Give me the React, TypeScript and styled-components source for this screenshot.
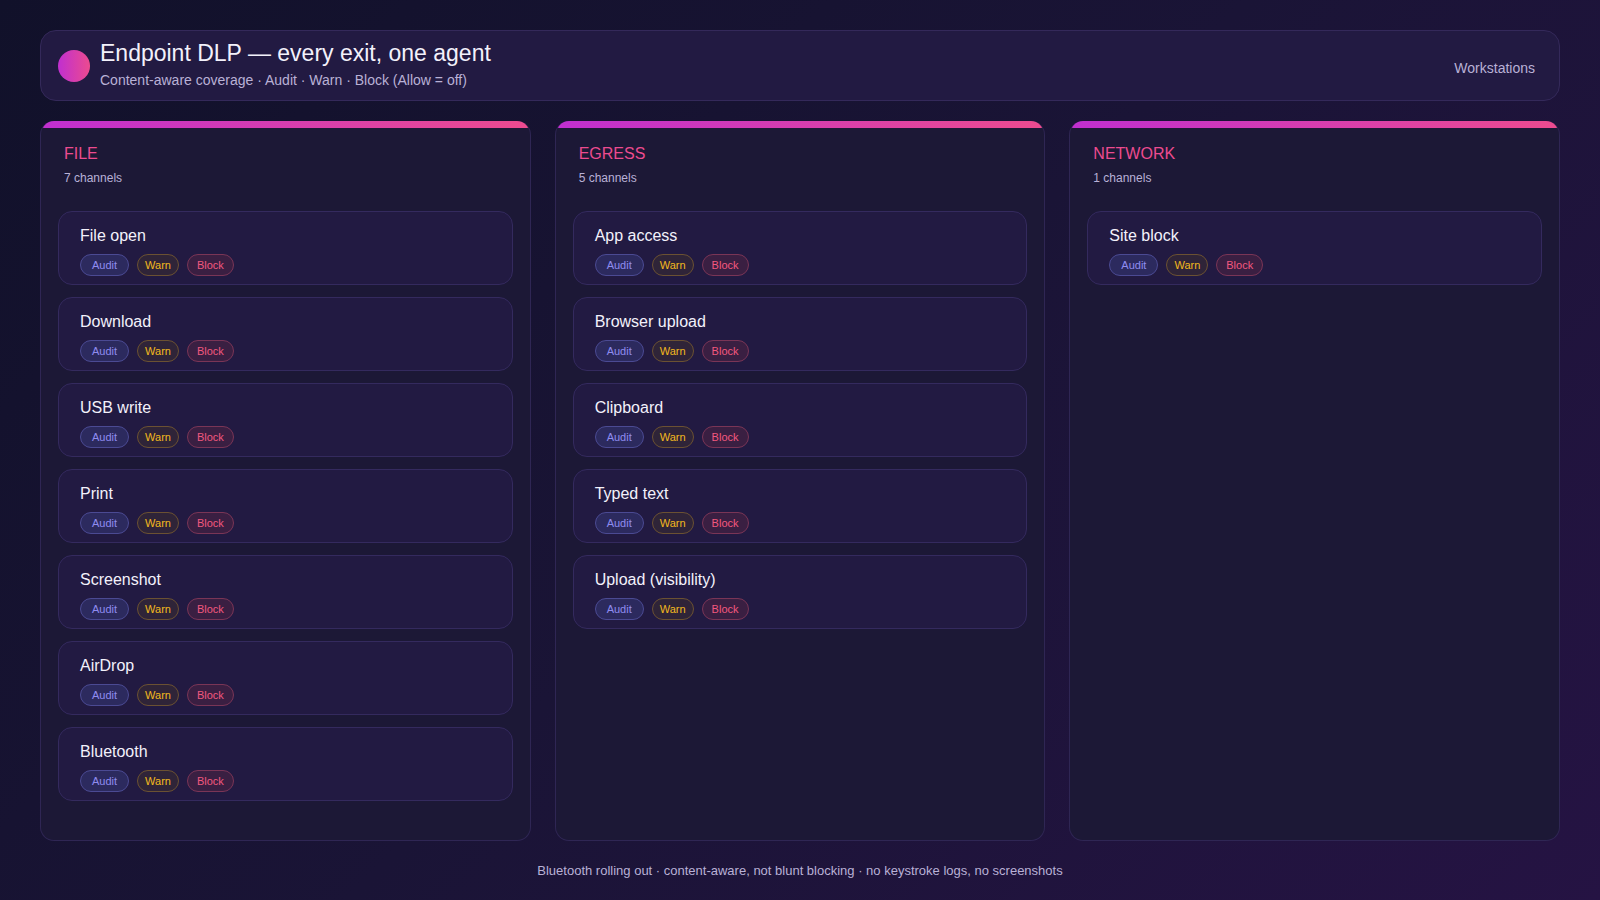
import React from "react";
import styled, { createGlobalStyle } from "styled-components";

const Global = createGlobalStyle`
  html, body { margin: 0; padding: 0; }
  body {
    font-family: "Liberation Sans", Arial, sans-serif;
    background: linear-gradient(135deg, #11112a 0%, #1a1436 50%, #251343 100%);
    width: 1600px; height: 900px; overflow: hidden;
  }
`;

const Page = styled.div`
  box-sizing: border-box;
  width: 1600px; height: 900px;
  padding: 30px 40px 0 40px;
  display: flex; flex-direction: column;
`;

const Header = styled.div`
  box-sizing: border-box;
  height: 71px;
  border: 1px solid #34295a;
  background: #221a42;
  border-radius: 16px;
  display: flex; align-items: center;
  padding: 0 24px 0 17px;
  gap: 10px;
`;

const Dot = styled.div`
  width: 32px; height: 32px; border-radius: 50%;
  background: linear-gradient(90deg, #c02fd0, #ec4b8f);
`;

const Titles = styled.div` flex: 1; display: flex; flex-direction: column; gap: 5px; margin-top: -4px;`;
const Title = styled.div` color: #f3f1fb; font-size: 23px; `;
const Sub = styled.div` color: #b9b1d6; font-size: 14px; `;
const Right = styled.div` color: #b9b1d6; font-size: 14px; margin-top: 4px; `;

const Columns = styled.div`
  margin-top: 20px;
  display: grid; grid-template-columns: repeat(3, 1fr); gap: 24px;
  height: 720px;
`;

const Col = styled.div`
  box-sizing: border-box;
  display: flex; flex-direction: column;
  border: 1px solid #2f2654;
  border-top: none;
  border-radius: 14px;
  background: #1c1836;
  overflow: hidden;
`;

const Bar = styled.div`
  height: 7px; border-radius: 4px;
  background: linear-gradient(90deg, #c02fd0, #ec4b8f);
`;

const ColBody = styled.div`
  padding: 17px 17px 0 17px;
  display: flex; flex-direction: column;
`;

const ColTitle = styled.div` color: #ec4b8f; font-size: 16px; padding-left: 6px; `;
const ColCount = styled.div` color: #b9b1d6; font-size: 12px; padding-left: 6px; margin-top: 8px; margin-bottom: 26px; `;

const Cards = styled.div` display: flex; flex-direction: column; gap: 12px; `;

const Card = styled.div`
  box-sizing: border-box;
  height: 74px;
  border: 1px solid #342a5e;
  background: #221a42;
  border-radius: 14px;
  padding: 15px 21px 0 21px;
`;

const CardTitle = styled.div` color: #f3f1fb; font-size: 16px; `;

const Pills = styled.div` display: flex; gap: 8px; margin-top: 9px; `;

const Pill = styled.span<{ $c: string; $bg: string; $b: string }>`
  display: inline-flex; align-items: center; justify-content: center;
  height: 22px; padding: 0 11px; border-radius: 11px; box-sizing: border-box;
  font-size: 11px; color: ${p => p.$c}; background: ${p => p.$bg}; border: 1px solid ${p => p.$b};
`;

const Footer = styled.div`
  text-align: center; color: #b9b1d6; font-size: 13px; margin-top: 22px;
`;

const cols = [
  { t: "FILE", items: ["File open", "Download", "USB write", "Print", "Screenshot", "AirDrop", "Bluetooth"] },
  { t: "EGRESS", items: ["App access", "Browser upload", "Clipboard", "Typed text", "Upload (visibility)"] },
  { t: "NETWORK", items: ["Site block"] },
];

export default function App() {
  return (
    <>
      <Global />
      <Page>
        <Header>
          <Dot />
          <Titles>
            <Title>Endpoint DLP — every exit, one agent</Title>
            <Sub>Content-aware coverage · Audit · Warn · Block (Allow = off)</Sub>
          </Titles>
          <Right>Workstations</Right>
        </Header>
        <Columns>
          {cols.map(c => (
            <Col key={c.t}>
              <Bar />
              <ColBody>
                <ColTitle>{c.t}</ColTitle>
                <ColCount>{c.items.length} channels</ColCount>
                <Cards>
                  {c.items.map(i => (
                    <Card key={i}>
                      <CardTitle>{i}</CardTitle>
                      <Pills>
                        <Pill $c="#8f8cf0" $bg="#2c2a5e" $b="#4b4a93">Audit</Pill>
                        <Pill $c="#f2b81e" $bg="#2f2438" $b="#6b5132" style={{ padding: "0 7px" }}>Warn</Pill>
                        <Pill $c="#f2587f" $bg="#3a1f42" $b="#7a3556" style={{ padding: "0 9px" }}>Block</Pill>
                      </Pills>
                    </Card>
                  ))}
                </Cards>
              </ColBody>
            </Col>
          ))}
        </Columns>
        <Footer>Bluetooth rolling out · content-aware, not blunt blocking · no keystroke logs, no screenshots</Footer>
      </Page>
    </>
  );
}
